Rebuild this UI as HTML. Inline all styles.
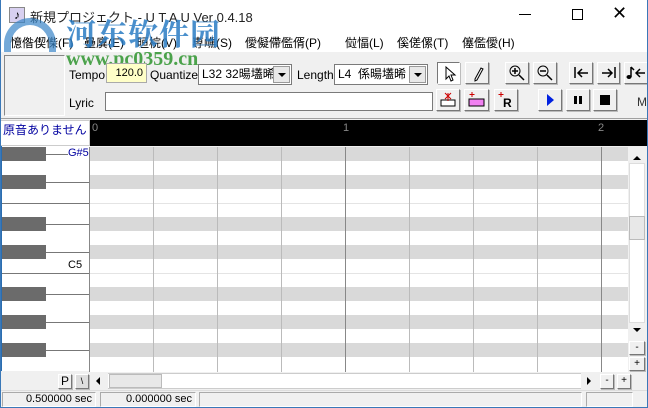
<!DOCTYPE html>
<html><head><meta charset="utf-8">
<style>
*{margin:0;padding:0;box-sizing:border-box}
body{width:648px;height:408px;overflow:hidden;background:#f0f0f0;font-family:"Liberation Sans","Noto Sans CJK JP",sans-serif;font-size:12px;color:#000;position:relative}
.a{position:absolute}
.m{position:absolute;top:34px;font-size:12px;white-space:nowrap}
.btn{position:absolute;background:#f0f0f0;border:1px solid;border-color:#fff #777 #777 #fff;box-shadow:1px 1px 0 #bbb}
.combo{position:absolute;background:#fff;border:1px solid #7a7a7a;height:21px;font-size:12px;line-height:19px;padding-left:3px}
.dd{position:absolute;right:1px;top:1px;width:17px;height:17px;background:#e8e8e8;border:1px solid #999}
.dd:after{content:"";position:absolute;left:4px;top:6px;border:4px solid transparent;border-top:4px solid #000}
</style></head><body>
<div class="a" style="left:0;top:0;width:648px;height:31px;background:#fff"></div>
<div class="a" style="left:9px;top:7px;width:16px;height:16px;background:#d8d0f0;border:1px solid #888;font-size:12px;line-height:14px;text-align:center">♪</div>
<div class="a" style="left:30px;top:7px;font-size:13px;color:#222">新規プロジェクト - U T A U Ver 0.4.18</div>
<div class="a" style="left:519px;top:14px;width:12px;height:1px;background:#000"></div>
<div class="a" style="left:572px;top:9px;width:11px;height:11px;border:1px solid #000"></div>
<div class="a" style="left:612px;top:3px;font-size:18px;font-weight:300">✕</div>
<div class="a" style="left:0;top:31px;width:648px;height:21px;background:#fff"></div>
<div class="m" style="left:10px">憶偺偰偨(F)</div>
<div class="m" style="left:84px">壘廙(E)</div>
<div class="m" style="left:137px">晅梡(V)</div>
<div class="m" style="left:192px">専嶕(S)</div>
<div class="m" style="left:245px">僾儗僀儖偦(P)</div>
<div class="m" style="left:345px">傡愊(L)</div>
<div class="m" style="left:397px">傒傞傫(T)</div>
<div class="m" style="left:462px">僿儖僾(H)</div>
<div class="a" style="left:66px;top:10px;font-size:30px;font-weight:bold;color:#2a7cc4;opacity:.85;font-family:'Noto Serif CJK SC',serif;letter-spacing:1px">河东软件园</div>
<div class="a" style="left:66px;top:48px;font-size:20px;font-weight:bold;color:#3a9a3a;font-family:'Liberation Serif',serif;opacity:.9">www.pc0359.cn</div>
<div class="a" style="left:4px;top:18px;width:52px;height:34px;border-radius:26px 26px 0 0;border:7px solid #3a86c8;border-bottom:none;opacity:.7"></div>
<div class="a" style="left:4px;top:55px;width:61px;height:61px;border:1px solid;border-color:#888 #fff #fff #888;background:#f0f0f0"></div>
<div class="a" style="left:69px;top:68px">Tempo</div>
<div class="a" style="left:106px;top:63px;width:41px;height:20px;background:#ffffc8;border:1px solid #aaa;text-align:right;padding-right:3px;line-height:18px;font-size:11px">120.0</div>
<div class="a" style="left:150px;top:68px">Quantize</div>
<div class="combo" style="left:198px;top:64px;width:94px">L32 32暘壒晞<div class="dd"></div></div>
<div class="a" style="left:297px;top:68px">Length</div>
<div class="combo" style="left:334px;top:64px;width:94px">L4 &nbsp;係暘壒晞<div class="dd"></div></div>
<div class="a" style="left:69px;top:96px">Lyric</div>
<div class="a" style="left:105px;top:92px;width:328px;height:19px;background:#fff;border:1px solid #7a7a7a"></div>
<div class="btn" style="left:437px;top:62px;width:23px;height:22px;background:#fff;border-color:#777 #fff #fff #777"><svg width="21" height="20"><path d="M8 4 L8 16 L11 13 L13 18 L15 17 L13 12 L17 12 Z" fill="#fff" stroke="#000"/></svg></div>
<div class="btn" style="left:465px;top:62px;width:24px;height:22px"><svg width="22" height="20"><path d="M9 16 L15 5 L17 6 L11 17 L9 18 Z" fill="none" stroke="#000"/></svg></div>
<div class="btn" style="left:505px;top:62px;width:24px;height:22px"><svg width="22" height="20"><circle cx="9" cy="8" r="5" fill="none" stroke="#000"/><path d="M13 12 L18 17 M6 8 H12 M9 5 V11" stroke="#000" stroke-width="1.5"/></svg></div>
<div class="btn" style="left:533px;top:62px;width:24px;height:22px"><svg width="22" height="20"><circle cx="9" cy="8" r="5" fill="none" stroke="#000"/><path d="M13 12 L18 17 M6 8 H12" stroke="#000" stroke-width="1.5"/></svg></div>
<div class="btn" style="left:569px;top:62px;width:24px;height:22px"><svg width="22" height="20"><path d="M5 4 V15 M8 10 H18 M12 6 L8 10 L12 14" stroke="#000" stroke-width="1.5" fill="none"/></svg></div>
<div class="btn" style="left:597px;top:62px;width:23px;height:22px"><svg width="21" height="20"><path d="M17 4 V15 M4 10 H14 M10 6 L14 10 L10 14" stroke="#000" stroke-width="1.5" fill="none"/></svg></div>
<div class="btn" style="left:624px;top:62px;width:26px;height:22px"><svg width="24" height="20"><path d="M6 4 V14 M6 4 L9 7" stroke="#000" stroke-width="1.5" fill="none"/><ellipse cx="4" cy="14" rx="2.5" ry="2" fill="#000"/><path d="M15 6 L11 10 L15 14 M11 10 H20" stroke="#000" stroke-width="1.5" fill="none"/></svg></div>
<div class="btn" style="left:436px;top:89px;width:24px;height:22px"><svg width="22" height="20"><rect x="4" y="10" width="14" height="6" fill="#fff" stroke="#000"/><path d="M8 3 L14 9 M14 3 L8 9 M11 3 V11" stroke="#c00"/></svg></div>
<div class="btn" style="left:464px;top:89px;width:25px;height:22px"><svg width="23" height="20"><rect x="4" y="9" width="15" height="7" fill="#f080f0" stroke="#000"/><path d="M7 2 V7 M4.5 4.5 H9.5" stroke="#c00"/></svg></div>
<div class="btn" style="left:494px;top:89px;width:24px;height:22px"><svg width="22" height="20"><path d="M6 2 V7 M3.5 4.5 H8.5" stroke="#c00"/><text x="8" y="17" font-size="12" font-weight="bold" font-family="Liberation Sans">R</text></svg></div>
<div class="btn" style="left:538px;top:89px;width:24px;height:22px"><svg width="22" height="20"><path d="M8 4 L15 10 L8 16 Z" fill="#0020e0"/></svg></div>
<div class="btn" style="left:566px;top:89px;width:24px;height:22px"><svg width="22" height="20"><rect x="7" y="6" width="3" height="8" fill="#000"/><rect x="12" y="6" width="3" height="8" fill="#000"/></svg></div>
<div class="btn" style="left:593px;top:89px;width:24px;height:22px"><svg width="22" height="20"><rect x="6" y="5" width="10" height="10" fill="#000"/></svg></div>
<div class="a" style="left:637px;top:95px;color:#333">M</div>
<div class="a" style="left:0;top:118px;width:648px;height:1px;background:#a0a0a0"></div>
<div class="a" style="left:0;top:120px;width:90px;height:26px;background:#fff;border:1px solid #ccc"></div>
<div class="a" style="left:3px;top:121px;color:#0000a0;font-size:12px">原音ありません</div>
<div class="a" style="left:90px;top:120px;width:558px;height:26px;background:#000"></div>
<div class="a" style="left:92px;top:122px;color:#888;font-size:11px">0</div>
<div class="a" style="left:343px;top:122px;color:#888;font-size:11px">1</div>
<div class="a" style="left:598px;top:122px;color:#888;font-size:11px">2</div>
<div class="a" style="left:0;top:146px;width:90px;height:225px;background:#fff;border-left:2px solid #2a6db0"></div>
<svg class="a" style="left:0;top:147px" width="628" height="225">
<rect x="90" y="0" width="538" height="225" fill="#fff"/>
<g fill="#d9d9d9">
<rect x="90" y="0" width="538" height="14"/><rect x="90" y="28" width="538" height="14"/><rect x="90" y="70" width="538" height="14"/><rect x="90" y="98" width="538" height="14"/><rect x="90" y="140" width="538" height="14"/><rect x="90" y="168" width="538" height="14"/><rect x="90" y="196" width="538" height="14"/></g>
<g stroke="#e4e4e4"><path d="M90 56.5H628M90 126.5H628"/></g>
<g fill="#6b6b6b"><rect x="2" y="0" width="44" height="14"/><rect x="2" y="28" width="44" height="14"/><rect x="2" y="70" width="44" height="14"/><rect x="2" y="98" width="44" height="14"/><rect x="2" y="140" width="44" height="14"/><rect x="2" y="168" width="44" height="14"/><rect x="2" y="196" width="44" height="14"/></g>
<g stroke="#777"><path d="M46 7.5H68M46 35.5H90M2 56.5H90M46 77.5H90M46 105.5H90M2 126.5H90M46 147.5H90M46 175.5H90M46 203.5H90"/></g>
<g stroke="#bbb"><path d="M153.5 0V225M217.5 0V225M281.5 0V225M409.5 0V225M473.5 0V225M537.5 0V225"/></g>
<g stroke="#888"><path d="M89.5 0V225M345.5 0V225M601.5 0V225"/></g>
</svg>
<div class="a" style="left:68px;top:147px;color:#0000a0;font-size:11px">G#5</div>
<div class="a" style="left:68px;top:259px;font-size:11px">C5</div>
<div class="a" style="left:628px;top:147px;width:18px;height:225px;background:#f0f0f0"></div>
<div class="a" style="left:629px;top:163px;width:16px;height:160px;background:#fff;border:1px solid #ddd"></div>
<div class="a" style="left:629px;top:216px;width:16px;height:24px;background:#e8e8e8;border:1px solid #bbb"></div>
<div class="a" style="left:633px;top:152px;border:4px solid transparent;border-bottom:4px solid #000"></div>
<div class="a" style="left:633px;top:328px;border:4px solid transparent;border-top:4px solid #000"></div>
<div class="btn" style="left:629px;top:341px;width:16px;height:14px;font-size:10px;text-align:center;line-height:12px">-</div>
<div class="btn" style="left:629px;top:357px;width:16px;height:14px;font-size:10px;text-align:center;line-height:12px">+</div>
<div class="btn" style="left:58px;top:374px;width:14px;height:15px;font-size:12px;text-align:center;line-height:13px">P</div>
<div class="btn" style="left:75px;top:374px;width:14px;height:15px;font-size:9px;text-align:center;line-height:13px;background:#ddd">\</div>
<div class="a" style="left:92px;top:373px;width:505px;height:16px;background:#fff;border:1px solid #ccc"></div>
<div class="a" style="left:92px;top:373px;width:16px;height:16px;background:#f0f0f0"></div>
<div class="a" style="left:96px;top:377px;border:4px solid transparent;border-right:4px solid #000;border-left:0"></div>
<div class="a" style="left:109px;top:374px;width:53px;height:14px;background:#e8e8e8;border:1px solid #bbb"></div>
<div class="a" style="left:581px;top:373px;width:16px;height:16px;background:#f0f0f0"></div>
<div class="a" style="left:595px;top:377px;border:4px solid transparent;border-left:4px solid #000;border-right:0;transform:translateX(-8px)"></div>
<div class="btn" style="left:600px;top:374px;width:14px;height:15px;font-size:10px;text-align:center;line-height:12px">-</div>
<div class="btn" style="left:617px;top:374px;width:14px;height:15px;font-size:10px;text-align:center;line-height:12px">+</div>
<div class="a" style="left:0;top:390px;width:648px;height:18px;background:#f0f0f0;border-top:1px solid #ddd"></div>
<div class="a" style="left:2px;top:392px;width:94px;height:15px;border:1px solid;border-color:#aaa #fff #fff #aaa;text-align:right;padding-right:3px;font-size:11px;line-height:13px">0.500000 sec</div>
<div class="a" style="left:100px;top:392px;width:96px;height:15px;border:1px solid;border-color:#aaa #fff #fff #aaa;text-align:right;padding-right:3px;font-size:11px;line-height:13px">0.000000 sec</div>
<div class="a" style="left:199px;top:392px;width:383px;height:15px;border:1px solid;border-color:#aaa #fff #fff #aaa"></div>
<div class="a" style="left:586px;top:392px;width:47px;height:15px;border:1px solid;border-color:#aaa #fff #fff #aaa"></div>
<div class="a" style="left:0;top:0;width:648px;height:408px;border:1px solid #3a78b8;border-top:none"></div>
</body></html>
